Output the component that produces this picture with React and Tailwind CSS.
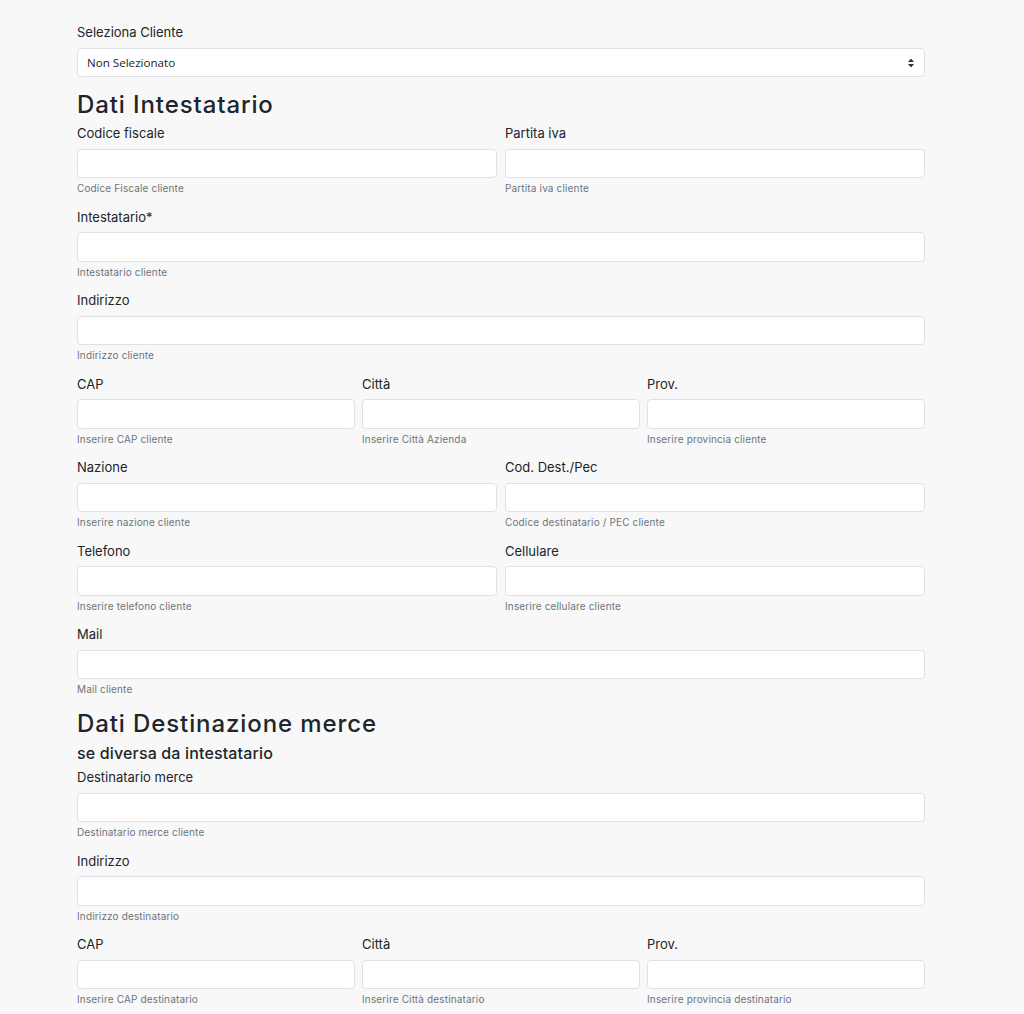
import React from "react";

/**
 * Field
 * label + input + help text
 */
const Field = ({ label, help }) => (
  <div className="flex flex-col mb-[10.5px]">
    <label className="pt-[1px] text-[13px] leading-[19.5px] text-[#212529] mb-[5px]">
      {label}
    </label>
    <input
      type="text"
      className="h-[29.5px] w-full bg-white border border-[#dee2e6] rounded-[4px] px-2 outline-none"
    />
    <small className="mt-[3px] text-[10px] leading-[15px] tracking-[0.15px] text-[#6c757d]">
      {help}
    </small>
  </div>
);

export default function App() {
  return (
    <div
      className="min-h-screen bg-[#f8f8f8] pt-[22.25px]"
      style={{ fontFamily: "Inter, 'Noto Sans', sans-serif" }}
    >
      <div className="ml-[77px] w-[848px]">
        {/* Cliente */}
        <div className="flex flex-col">
          <label className="pt-[1px] text-[13px] leading-[19.5px] text-[#212529] mb-[5px]">
            Seleziona Cliente
          </label>
          <div className="relative h-[29.5px] bg-white border border-[#dee2e6] rounded-[4px] flex items-center px-[9px]">
            <span
              className="text-[11.6px] text-[#212529]"
              style={{ fontFamily: "'Open Sans', sans-serif" }}
            >
              Non Selezionato
            </span>
            <svg
              className="absolute right-[10px] top-1/2 -translate-y-1/2"
              width="6"
              height="9"
              viewBox="0 0 6 9"
            >
              <path d="M3 0 L6 3.5 H0 Z" fill="#333" />
              <path d="M3 9 L6 5.5 H0 Z" fill="#333" />
            </svg>
          </div>
        </div>

        {/* Dati Intestatario */}
        <h3 className="mt-[13.35px] mb-[3.85px] text-[24px] leading-[28.8px] tracking-[0.9px] font-medium text-[#212529]">
          Dati Intestatario
        </h3>

        <div className="grid grid-cols-2 gap-x-2">
          <Field label="Codice fiscale" help="Codice Fiscale cliente" />
          <Field label="Partita iva" help="Partita iva cliente" />
        </div>
        <Field label="Intestatario*" help="Intestatario cliente" />
        <Field label="Indirizzo" help="Indirizzo cliente" />
        <div className="grid grid-cols-3 gap-x-[7px]">
          <Field label="CAP" help="Inserire CAP cliente" />
          <Field label="Città" help="Inserire Città Azienda" />
          <Field label="Prov." help="Inserire provincia cliente" />
        </div>
        <div className="grid grid-cols-2 gap-x-2">
          <Field label="Nazione" help="Inserire nazione cliente" />
          <Field label="Cod. Dest./Pec" help="Codice destinatario / PEC cliente" />
        </div>
        <div className="grid grid-cols-2 gap-x-2">
          <Field label="Telefono" help="Inserire telefono cliente" />
          <Field label="Cellulare" help="Inserire cellulare cliente" />
        </div>
        <Field label="Mail" help="Mail cliente" />

        {/* Dati Destinazione merce */}
        <h3 className="mt-[12.5px] text-[24px] leading-[28.8px] tracking-[0.9px] font-medium text-[#212529]">
          Dati Destinazione merce
        </h3>
        <h5 className="mt-[5px] mb-[4.65px] text-[16px] leading-[19.2px] tracking-[0.15px] font-medium text-[#212529]">
          se diversa da intestatario
        </h5>
        <Field label="Destinatario merce" help="Destinatario merce cliente" />
        <Field label="Indirizzo" help="Indirizzo destinatario" />
        <div className="grid grid-cols-3 gap-x-[7px]">
          <Field label="CAP" help="Inserire CAP destinatario" />
          <Field label="Città" help="Inserire Città destinatario" />
          <Field label="Prov." help="Inserire provincia destinatario" />
        </div>
      </div>
    </div>
  );
}
